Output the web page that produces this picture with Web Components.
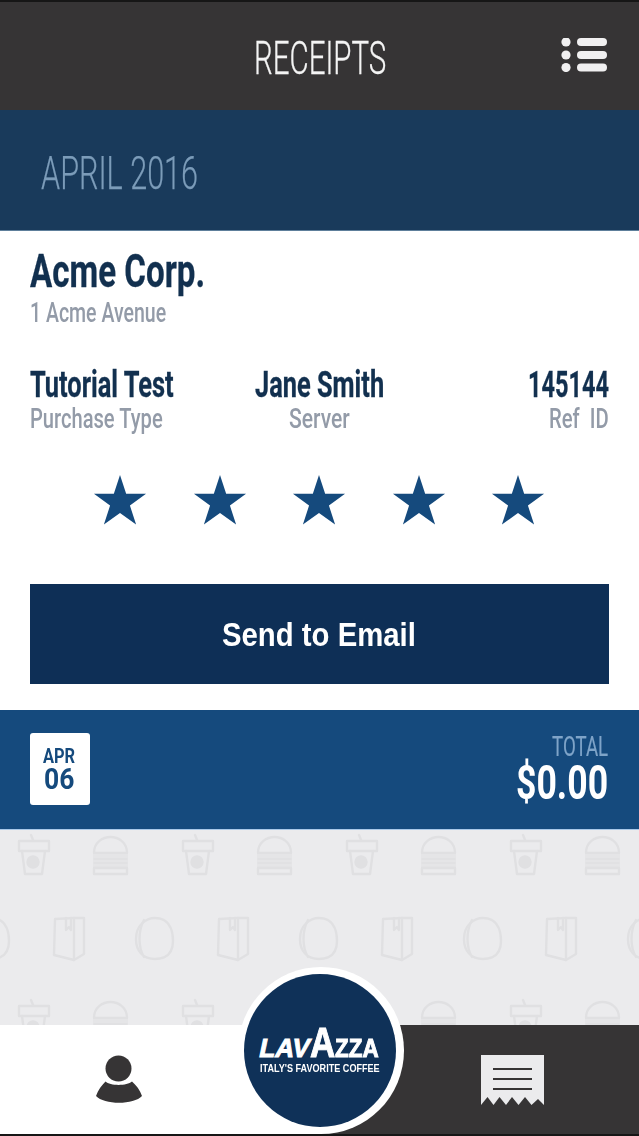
<!DOCTYPE html>
<html lang="en">
<head>
<meta charset="utf-8">
<title>Receipts</title>
<style>
html,body{margin:0;padding:0;background:#ebebed}
</style>
</head>
<body>
<receipts-app></receipts-app>
<script>
const F='Roboto,"Liberation Sans",sans-serif';
class FitText extends HTMLElement{
  constructor(){super();
    this.attachShadow({mode:'open'}).innerHTML=`<style>
    :host{display:inline-block;white-space:nowrap;vertical-align:top}
    #i{display:inline-block;transform-origin:0 50%}
    </style><span id="i"><slot></slot></span>`;
  }
  connectedCallback(){
    const w=parseFloat(this.getAttribute('w'));
    const i=this.shadowRoot.getElementById('i');
    const n=i.offsetWidth;
    this.style.width=w+'px';
    i.style.transform='scaleX('+(w/n)+')';
  }
}
customElements.define('fit-text',FitText);

class AppHeader extends HTMLElement{
  constructor(){super();
    this.attachShadow({mode:'open'}).innerHTML=`<style>
    :host{display:grid;grid-template-columns:1fr auto 1fr;align-items:center;height:108px;background:#363435;border-top:2px solid #161616;color:#f4f4f4}
    .t{grid-column:2;font:300 46px/46px ${F};margin-top:3px;-webkit-text-stroke:.3px #f4f4f4}
    svg{justify-self:end;margin:-2px 32px 0 0;display:block}
    </style>
    <div class="t"><fit-text w="132">RECEIPTS</fit-text></div>
    <svg width="46" height="34" viewBox="0 0 46 34" aria-hidden="true" fill="#f1f0f1">
      <circle cx="5" cy="4" r="4.6"/><circle cx="5" cy="17" r="4.6"/><circle cx="5" cy="29.5" r="4.6"/>
      <rect x="16" y="0" width="30" height="8" rx="4"/><rect x="16" y="13" width="30" height="8" rx="4"/><rect x="16" y="25.5" width="30" height="8" rx="4"/>
    </svg>`;
  }
}
customElements.define('app-header',AppHeader);

class MonthBand extends HTMLElement{
  constructor(){super();
    this.attachShadow({mode:'open'}).innerHTML=`<style>
    :host{display:flex;align-items:center;height:120px;padding-left:41px;background:#193a5b;border-bottom:1px solid #5e7f9b;color:#7c9cb9}
    div{font:300 46px/46px ${F};margin-top:6px;-webkit-text-stroke:.25px #7c9cb9}
    </style><div><fit-text w="157"><slot></slot></fit-text></div>`;
  }
}
customElements.define('month-band',MonthBand);

class StarRating extends HTMLElement{
  constructor(){super();
    const star=`<svg width="54" height="52" viewBox="-1 0 56 52" aria-hidden="true"><polygon fill="#154a7d" points="27,0 33.4,19.6 54,19.6 37.3,31.8 43.7,51.5 27,39.4 10.3,51.5 16.7,31.8 0,19.6 20.6,19.6"/></svg>`;
    this.attachShadow({mode:'open'}).innerHTML=`<style>
    :host{display:flex;justify-content:center;gap:45.5px;padding-right:1px}
    svg{display:block}
    </style>`+star.repeat(5);
  }
}
customElements.define('star-rating',StarRating);

class InfoCol extends HTMLElement{
  constructor(){super();
    const v=this.getAttribute('value'),vw=this.getAttribute('vw'),l=this.getAttribute('label'),lw=this.getAttribute('lw');
    this.attachShadow({mode:'open'}).innerHTML=`<style>
    :host{display:flex;flex-direction:column;align-items:var(--align,flex-start)}
    .v{font:700 36px/30px ${F};color:#12304f;height:30px;-webkit-text-stroke:.3px #12304f}
    .l{font:500 28px/26px ${F};color:#939ba8;height:26px;margin-top:6px}
    </style>
    <div class="v"><fit-text w="${vw}">${v}</fit-text></div>
    <div class="l"><fit-text w="${lw}">${l}</fit-text></div>`;
  }
}
customElements.define('info-col',InfoCol);

class ReceiptCard extends HTMLElement{
  constructor(){super();
    this.attachShadow({mode:'open'}).innerHTML=`<style>
    :host{display:block;background:#fff;height:479px;padding:0 30px;box-sizing:border-box;overflow:hidden}
    .name{font:700 46px/40px ${F};color:#12304f;height:40px;margin-top:20px;-webkit-text-stroke:.3px #12304f}
    .addr{font:500 27px/24px ${F};color:#939ba8;height:24px;margin-top:10px}
    .row{display:grid;grid-template-columns:1fr auto 1fr;margin-top:45px}
    info-col.c{--align:center}
    info-col.r{--align:flex-end}
    star-rating{margin-top:42px}
    button{display:flex;align-items:center;justify-content:center;width:579px;height:100px;margin:58px 0 0;padding:0 2px 0 0;border:0;background:#0e2f56;color:#fff;font:700 34px/40px "Liberation Sans",Arial,sans-serif}
    </style>
    <div class="name"><fit-text w="175">Acme Corp.</fit-text></div>
    <div class="addr"><fit-text w="136">1 Acme Avenue</fit-text></div>
    <div class="row">
      <info-col value="Tutorial Test" vw="144" label="Purchase Type" lw="133"></info-col>
      <info-col class="c" value="Jane Smith" vw="129" label="Server" lw="61"></info-col>
      <info-col class="r" value="145144" vw="81" label="Ref&nbsp;&nbsp;ID" lw="60"></info-col>
    </div>
    <star-rating></star-rating>
    <button type="button"><fit-text w="194">Send to Email</fit-text></button>`;
  }
}
customElements.define('receipt-card',ReceiptCard);

class TotalBand extends HTMLElement{
  constructor(){super();
    this.attachShadow({mode:'open'}).innerHTML=`<style>
    :host{display:flex;align-items:center;justify-content:space-between;height:120px;padding:0 31px 1px 30px;background:#154a7d;border-bottom:1px solid #a9c8e8;box-sizing:border-box}
    .date{width:60px;height:72px;padding-right:2px;box-sizing:border-box;background:#fff;border-radius:3px;display:flex;flex-direction:column;align-items:center;color:#154a7d;margin-top:-1px}
    .m{font:700 20px/18px ${F};margin-top:14px;height:18px}
    .d{font:700 30px/24px ${F};margin-top:2px;height:24px}
    .tot{display:flex;flex-direction:column;align-items:flex-end}
    .tl{font:400 28px/24px ${F};color:#7fa4c8;height:24px;-webkit-text-stroke:.2px #7fa4c8}
    .ta{font:700 48px/40px ${F};color:#fff;height:40px;margin-top:4px}
    </style>
    <div class="date"><div class="m"><fit-text w="32">APR</fit-text></div><div class="d"><fit-text w="30">06</fit-text></div></div>
    <div class="tot"><div class="tl"><fit-text w="56">TOTAL</fit-text></div><div class="ta"><fit-text w="92">$0.00</fit-text></div></div>`;
  }
}
customElements.define('total-band',TotalBand);

class PatternBg extends HTMLElement{
  constructor(){super();
    this.attachShadow({mode:'open'}).innerHTML=`<style>
    :host{display:block;height:195px;background:#ebebed;overflow:hidden}
    svg{display:block;width:100%;height:100%;filter:blur(.5px)}
    </style>
    <svg aria-hidden="true"><defs><pattern id="p" patternUnits="userSpaceOnUse" width="164" height="165">
      <g fill="none" stroke="#e0e0e2" stroke-width="2.400" stroke-linejoin="round" stroke-linecap="round">
        <path d="M33 10 L31 5"/>
        <path d="M19 11 H49 V21 H19 Z"/>
        <path d="M22 21 L25 44 H42 L45 21"/>
        <circle cx="33" cy="32" r="5.500" fill="#e0e0e2"/>
        <path d="M94 23 C94 12 103 7 110.500 7 C118 7 127 12 127 23 Z"/>
        <path fill="#e5e5e7" stroke="none" d="M93 24 H128 V37 H93 Z"/>
        <path d="M94 29 H127 M94 33 H127" stroke-width="1.500"/>
        <path d="M94 38 H127 V44 H94 Z"/>
        <path d="M55 89 L54 125 L74 130 L84 124 V88 L74 88 Z"/>
        <path d="M74 88 V130"/>
        <path d="M66 88 V100 L69 97 L71 100 V88"/>
        <path d="M136 109 C136 95 146 88 155 88 C167 88 173 97 173 111 C173 123 167 129 155 129 C143 129 136 121 136 109 Z"/>
        <path d="M144 90 C138 101 138 117 144 127"/>
        <path d="M-28 109 C-28 95 -18 88 -9 88 C3 88 9 97 9 111 C9 123 3 129 -9 129 C-21 129 -28 121 -28 109 Z"/>
      </g>
    </pattern></defs><rect width="100%" height="100%" fill="url(#p)"/></svg>`;
  }
}
customElements.define('pattern-bg',PatternBg);

class BrandBadge extends HTMLElement{
  constructor(){super();
    this.attachShadow({mode:'open'}).innerHTML=`<style>
    :host{position:absolute;left:238px;top:967px;width:166px;height:167px;border-radius:50%;background:#fff;display:flex;align-items:center;justify-content:center}
    .c{width:152px;height:153px;margin-right:3px;border-radius:50%;background:#0f3158;color:#fff;display:flex;flex-direction:column;align-items:center;font-family:"Liberation Sans",Arial,sans-serif;font-weight:700}
    .lv{display:flex;align-items:flex-end;justify-content:center;height:34px;margin-top:52px;line-height:1;-webkit-text-stroke:1px #fff}
    .s{font-size:26px;line-height:24px;height:24px}
    .b{font-size:42px;line-height:34px;height:34px}
    .sk{transform:skewX(-12deg)}
    .tag{font-size:10px;line-height:10px;height:10px;margin-top:4px}
    </style>
    <div class="c">
      <div class="lv"><span class="s sk"><fit-text w="50">LAV</fit-text></span><span class="b"><fit-text w="25">A</fit-text></span><span class="s"><fit-text w="44">ZZA</fit-text></span></div>
      <div class="tag"><fit-text w="120">ITALY'S FAVORITE COFFEE</fit-text></div>
    </div>`;
  }
}
customElements.define('brand-badge',BrandBadge);

class BottomNav extends HTMLElement{
  constructor(){super();
    this.attachShadow({mode:'open'}).innerHTML=`<style>
    :host{display:grid;grid-template-columns:320px 319px;height:111px;border-bottom:2px solid #161616;box-sizing:border-box}
    div{display:flex;align-items:center;justify-content:center}
    .l{background:#fff;padding-right:83px}
    .r{background:#363435;padding-left:66px;padding-top:2px}
    svg{display:block}
    </style>
    <div class="l"><svg width="46" height="50" viewBox="0 0 46 50" aria-hidden="true" fill="#363435">
      <circle cx="22.500" cy="13.500" r="13"/>
      <path d="M9.500 26.500 C14 31 31 31 36 26.500 C40 30 44 35 46 41 C38 50 8 50 0 41 C2 35 6 30 9.500 26.500 Z"/>
    </svg></div>
    <div class="r"><svg width="63" height="51" viewBox="0 0 63 51" aria-hidden="true">
      <path fill="#ebebed" d="M0 0 H63 V50 L57 44 L50.500 50 L44 42 L37.500 50 L31 42 L25 50 L18.500 42 L12.500 50 L6.500 42 L0 50 Z"/>
      <path stroke="#363435" stroke-width="2.200" d="M12 14 H51 M12 24 H51 M12 34 H51"/>
    </svg></div>`;
  }
}
customElements.define('bottom-nav',BottomNav);

class ReceiptsApp extends HTMLElement{
  constructor(){super();
    this.attachShadow({mode:'open'}).innerHTML=`<style>
    :host{display:flex;flex-direction:column;position:relative;width:639px;height:1136px;overflow:hidden}
    </style>
    <app-header></app-header>
    <month-band>APRIL 2016</month-band>
    <receipt-card></receipt-card>
    <total-band></total-band>
    <pattern-bg></pattern-bg>
    <bottom-nav></bottom-nav>
    <brand-badge></brand-badge>`;
  }
}
customElements.define('receipts-app',ReceiptsApp);
</script>
</body>
</html>
